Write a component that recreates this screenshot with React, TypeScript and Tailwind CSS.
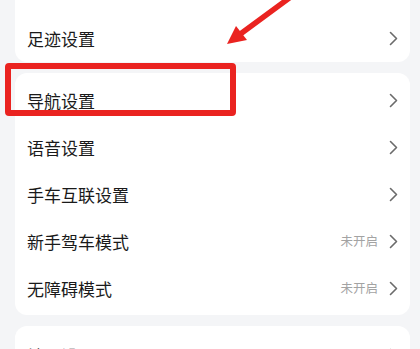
import React from "react";

const font = { fontFamily: '"Noto Sans CJK SC", "Noto Sans", sans-serif' };

function Chevron() {
  return (
    <svg width="9" height="15" viewBox="0 0 9 15" className="shrink-0">
      <path d="M1.5 1.5 L7.5 7.5 L1.5 13.5" fill="none" stroke="#6b6b6b" strokeWidth="1.6" strokeLinecap="round" strokeLinejoin="round" />
    </svg>
  );
}

function Row({ label, value }: { label: string; value?: string }) {
  return (
    <div className="flex h-[47px] items-center justify-between pl-[12px] pr-[12px]">
      <span className="text-[17px] text-[#1a1a1a] leading-none">{label}</span>
      <div className="flex items-center gap-[11px]">
        {value && <span className="text-[12.5px] text-[#a3a3a3] leading-none">{value}</span>}
        <Chevron />
      </div>
    </div>
  );
}

export default function App() {
  return (
    <div className="relative h-[349px] w-[420px] overflow-hidden bg-[#f4f5f7]" style={font}>
      <div className="flex flex-col gap-[11px] pl-[15px] pr-[10px]">
        <div className="flex h-[62px] flex-col justify-end rounded-b-[12px] bg-white">
          <Row label="足迹设置" />
        </div>
        <div className="flex flex-col rounded-[12px] bg-white pt-[4px] pb-[3px]">
          <Row label="导航设置" />
          <Row label="语音设置" />
          <Row label="手车互联设置" />
          <Row label="新手驾车模式" value="未开启" />
          <Row label="无障碍模式" value="未开启" />
        </div>
        <div className="flex flex-col rounded-t-[12px] bg-white pt-[6px]">
          <Row label="地图设置" />
        </div>
      </div>

      <div className="absolute left-[5px] top-[63px] h-[53px] w-[231px] rounded-[4px] border-[6px] border-[#ea2320]" />

      <svg className="absolute left-0 top-0" width="420" height="60" viewBox="0 0 420 60">
        <line x1="292" y1="-4" x2="239" y2="35" stroke="#ea2320" strokeWidth="5.5" strokeLinecap="round" />
        <polygon points="227,44 236,26 247,40" fill="#ea2320" />
      </svg>
    </div>
  );
}
